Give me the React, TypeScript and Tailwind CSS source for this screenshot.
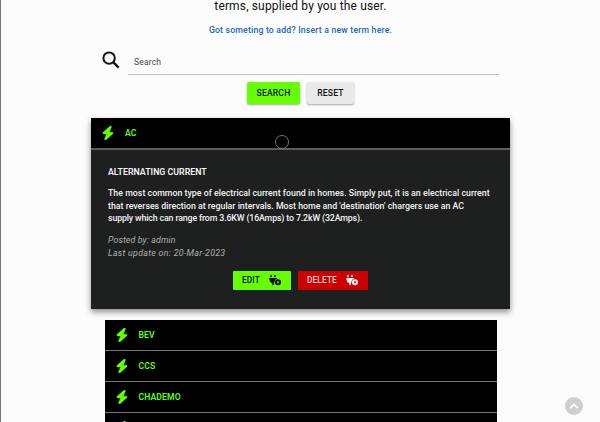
import type { ReactNode } from "react";
import { FaBolt, FaPlugCircleXmark } from "react-icons/fa6";
import { FaChevronUp } from "react-icons/fa";

function TermHeader({ children, className }: { children?: ReactNode; className: string }) {
  return (
    <div className={"flex items-center bg-black text-[8.6px] font-semibold tracking-[0.12px] text-[#66ff0a] " + className}>
      <FaBolt className="mr-[11px] h-[14px] w-[12px]" preserveAspectRatio="none" stroke="#66ff0a" strokeWidth="18" />
      <span>{children}</span>
    </div>
  );
}

function SearchIcon() {
  return (
    <svg viewBox="0 0 18 18" className="mt-[3px] size-[18px]" fill="none" stroke="#151515">
      <circle cx="7.1" cy="7.1" r="5.7" strokeWidth="2" />
      <path d="M11.2 11.2 L16.6 16.6" strokeWidth="2.4" />
    </svg>
  );
}

export default function App() {
  return (
    <div className="flex h-[422px] w-[600px] flex-col items-center overflow-hidden border-l border-[#777] bg-[#fcfcfd] font-['Roboto','Liberation_Sans',sans-serif] text-[#111] whitespace-nowrap">
      <p className="mt-[-2px] text-[12px] leading-[16px] tracking-[0.15px]">terms, supplied by you the user.</p>
      <a className="mt-[10px] text-[8.7px] leading-[12px] font-medium tracking-[0.19px] text-[#2464bd]">Got someting to add? Insert a new term here.</a>

      <div className="mt-[12px] flex w-[397px] items-start">
        <SearchIcon />
        <div className="ml-[8px] h-[27px] grow border-b border-[#c4c4c4] pt-[8px] pl-[6px] text-[8.6px] leading-[12px] tracking-[0.13px] text-[#444]">Search</div>
      </div>

      <div className="mt-[7px] flex gap-[7px] text-[8.6px] font-medium tracking-[0.15px]">
        <button className="h-[22px] w-[53px] rounded-[2px] bg-[#66ff00] shadow-[0_1px_2px_rgba(0,0,0,0.35)]">SEARCH</button>
        <button className="h-[22px] w-[47px] rounded-[2px] bg-[#e9e9e9] shadow-[0_1px_2px_rgba(0,0,0,0.35)]">RESET</button>
      </div>

      <section className="relative mt-[14px] h-[191px] w-[419px] shrink-0 bg-[#1e1f1f] text-[8.8px] text-[#f2f2f2] shadow-[0_3px_6px_rgba(0,0,0,0.45)]">
        <TermHeader className="h-[32px] border-b-2 border-[#5e5e5e] pl-[11px]">AC</TermHeader>
        <div className="px-[17px] pt-[16px]">
          <h2 className="leading-[13px] font-semibold">ALTERNATING CURRENT</h2>
          <p className="mt-[8px] leading-[12.7px] font-medium">
            <span className="block w-fit tracking-[0.01px]">The most common type of electrical current found in homes. Simply put, it is an electrical current</span>
            <span className="block w-fit tracking-[-0.01px]">that reverses direction at regular intervals. Most home and 'destination' chargers use an AC</span>
            <span className="block w-fit tracking-[-0.14px]">supply which can range from 3.6KW (16Amps) to 7.2kW (32Amps).</span>
          </p>
          <p className="mt-[9px] leading-[12.7px] text-[#b0b0b0] italic">
            <span className="block w-fit tracking-[0.12px]">Posted by: admin</span>
            <span className="block w-fit tracking-[0.3px]">Last update on: 20-Mar-2023</span>
          </p>
        </div>
        <div className="mt-[11px] flex justify-center gap-[7px] text-[8.2px] font-medium tracking-[0.2px]">
          <button className="flex h-[19px] w-[58px] items-center justify-between rounded-[1px] bg-[#66ff00] pr-[10px] pl-[9px] text-black">EDIT<FaPlugCircleXmark className="size-[12px]" /></button>
          <button className="flex h-[19px] w-[70px] items-center justify-between rounded-[1px] bg-[#cc0000] pr-[10px] pl-[9px] text-[#f5d5d5]">DELETE<FaPlugCircleXmark className="size-[12px] text-white" /></button>
        </div>
        <span className="absolute top-[17px] left-[184px] size-[14px] rounded-full border border-[#777]" />
      </section>

      <div className="mt-[11px] w-[392px]">
        <TermHeader className="h-[31px] border-b border-[#777] pl-[11px]">BEV</TermHeader>
        <TermHeader className="h-[31px] border-b border-[#777] pl-[11px]">CCS</TermHeader>
        <TermHeader className="h-[31px] border-b border-[#777] pl-[11px]">CHADEMO</TermHeader>
        <TermHeader className="h-[31px] border-b border-[#777] pl-[11px]" />
      </div>

      <button className="fixed right-[17px] bottom-[7px] flex size-[18px] items-center justify-center rounded-full bg-[#cfcfcf] text-white">
        <FaChevronUp className="size-[10px]" />
      </button>
    </div>
  );
}
